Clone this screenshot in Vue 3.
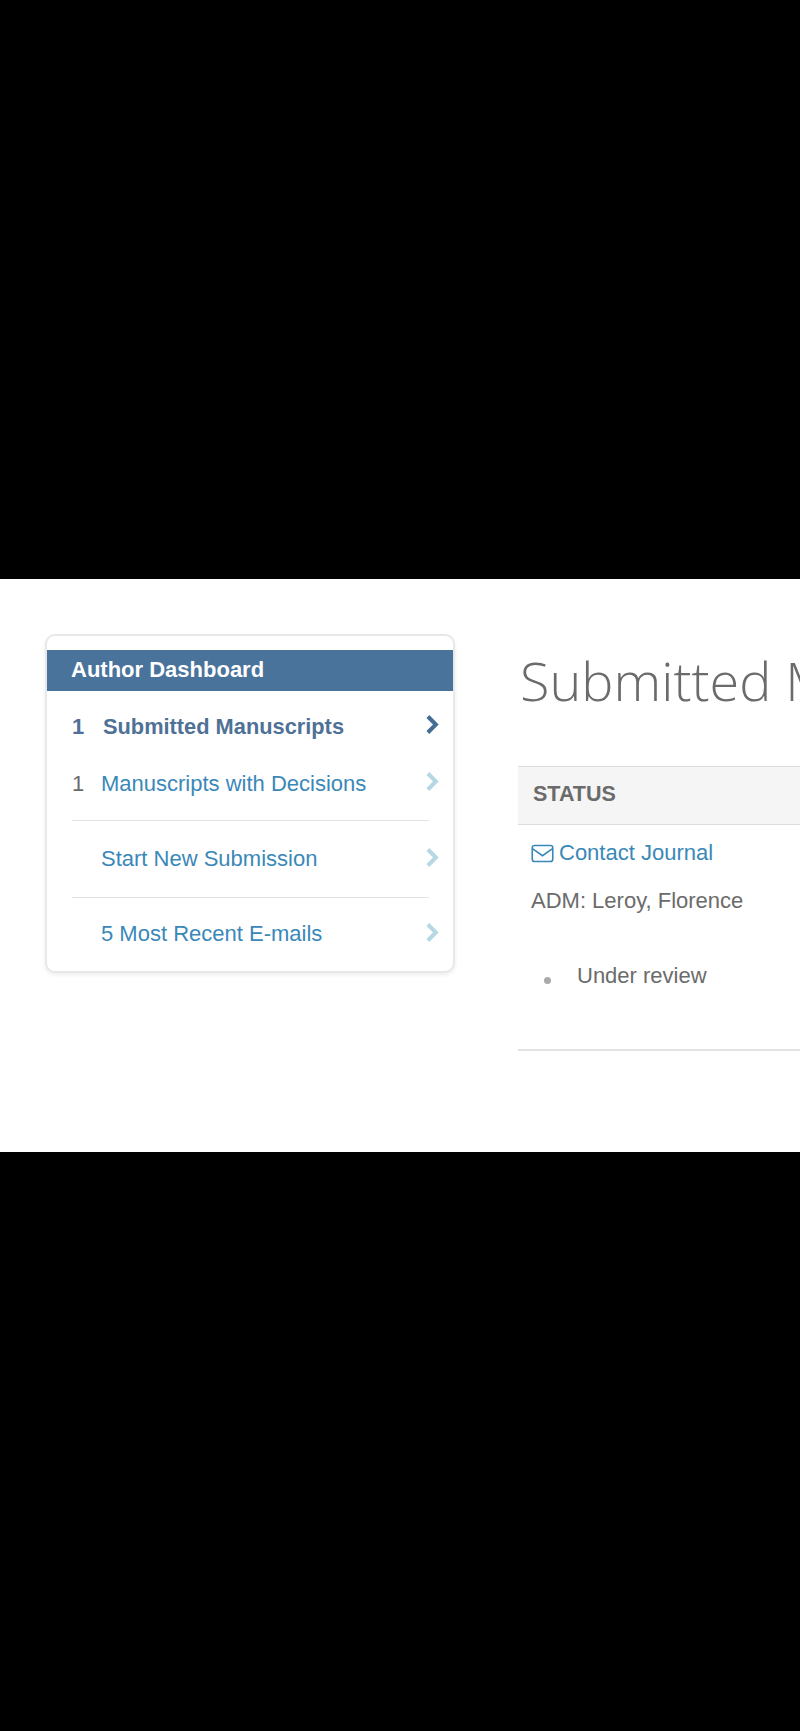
<script setup>
const items = [
  { count: '1', label: 'Submitted Manuscripts', active: true },
  { count: '1', label: 'Manuscripts with Decisions', spaced: true },
  { count: '', label: 'Start New Submission', rule: true },
  { count: '', label: '5 Most Recent E-mails', rule: true }
]
</script>

<template>
  <div class="screen">
    <div class="band"></div>

    <main class="page">
      <!-- SIDEBAR -->
      <aside class="card">
        <h2 class="card-title">Author Dashboard</h2>
        <ul class="menu">
          <li
            v-for="item in items"
            :key="item.label"
            class="menu-item"
            :class="{ active: item.active, ruled: item.rule, spaced: item.spaced }"
          >
            <span class="count">{{ item.count }}</span>
            <a class="label">{{ item.label }}</a>
            <svg class="chevron" viewBox="0 0 14 20" width="15" height="21">
              <path d="M2.6 2.4 10.2 10 2.6 17.6" fill="none" stroke="currentColor" stroke-width="3.8" />
            </svg>
          </li>
        </ul>
      </aside>

      <!-- CONTENT -->
      <section class="content">
        <h1 class="title">Submitted Manuscripts</h1>
        <div class="table">
          <div class="table-head">STATUS</div>
          <div class="table-body">
            <a class="contact">
              <svg viewBox="0 0 24 20" width="23" height="19">
                <rect x="1.2" y="1.6" width="21.6" height="16.8" rx="2.4" fill="none" stroke="currentColor" stroke-width="1.7" />
                <path d="M1.8 5.2 12 12.4 22.2 5.2" fill="none" stroke="currentColor" stroke-width="1.7" />
              </svg>
              Contact Journal
            </a>
            <p class="admin">ADM: Leroy, Florence</p>
            <div class="status">
              <span class="dot"></span>
              <span>Under review</span>
            </div>
          </div>
        </div>
      </section>
    </main>

    <div class="band"></div>
  </div>
</template>

<style>
html, body {
  margin: 0;
  background: #000;
  overflow: hidden;
}
</style>

<style scoped>
.screen {
  width: 800px;
  height: 1731px;
  display: flex;
  flex-direction: column;
  overflow: hidden;
  font-family: "Liberation Sans", Arial, sans-serif;
  font-size: 22px;
  color: #6b6b6b;
}

.band {
  height: 579px;
  background: #000;
  flex: none;
}

.page {
  height: 573px;
  flex: none;
  box-sizing: border-box;
  background: #fff;
  padding: 55px 0 0 45px;
  display: flex;
  align-items: flex-start;
  gap: 63px;
  overflow: hidden;
}

/* SIDEBAR */
.card {
  width: 410px;
  height: 339px;
  flex: none;
  box-sizing: border-box;
  padding-top: 14px;
  background: #fff;
  border: 2px solid #e8e8e8;
  border-radius: 10px;
  box-shadow: 0 2px 4px rgba(0, 0, 0, 0.07);
}

.card-title {
  margin: 0;
  height: 41px;
  line-height: 39px;
  padding-left: 24px;
  background: #4a739c;
  color: #fff;
  font-size: 22px;
  font-weight: 700;
}

.menu {
  list-style: none;
  margin: 0;
  padding: 7px 24px 0 25px;
}

.menu-item {
  height: 57px;
  display: flex;
  align-items: center;
  color: #3a88b8;
}

.menu-item.spaced {
  margin-bottom: 8px;
}

.menu-item.ruled {
  height: 76px;
  border-top: 1px solid #e3e3e3;
}

.menu-item.ruled:last-child {
  height: 72px;
}

.count {
  width: 29px;
  flex: none;
  color: #6b6b6b;
}

.label {
  flex: 1;
}

.chevron {
  flex: none;
  color: #b5d8e4;
  margin-right: -11px;
  margin-top: -4px;
}

.active .count,
.active .label {
  color: #4f7196;
  font-weight: 700;
}

.active .label {
  margin-left: 2px;
  font-size: 21.8px;
}

.active .chevron {
  color: #446d94;
}

/* CONTENT */
.content {
  width: 800px;
  flex: none;
}

.title {
  margin: 7px 0 46px 2px;
  height: 79px;
  line-height: 79px;
  font-family: "Open Sans", sans-serif;
  font-size: 54px;
  font-weight: 300;
  white-space: nowrap;
  color: #6b6b6b;
  font-variant-ligatures: none;
}

.table-head {
  height: 59px;
  line-height: 55px;
  box-sizing: border-box;
  padding-left: 15px;
  background: #f5f5f5;
  border-top: 1px solid #ddd;
  border-bottom: 1px solid #ddd;
  font-weight: 700;
  font-size: 21.5px;
}

.table-body {
  height: 226px;
  box-sizing: border-box;
  padding: 14px 0 0 13px;
  border-bottom: 2px solid #e3e3e3;
}

.contact {
  display: flex;
  align-items: center;
  gap: 5px;
  height: 28px;
  color: #3a88b8;
}

.admin {
  margin: 20px 0 0;
  line-height: 28px;
}

.status {
  margin-top: 47px;
  display: flex;
  align-items: center;
  line-height: 28px;
}

.dot {
  width: 7px;
  height: 7px;
  border-radius: 50%;
  background: #aaa;
  margin: 8px 26px 0 13px;
}
</style>
